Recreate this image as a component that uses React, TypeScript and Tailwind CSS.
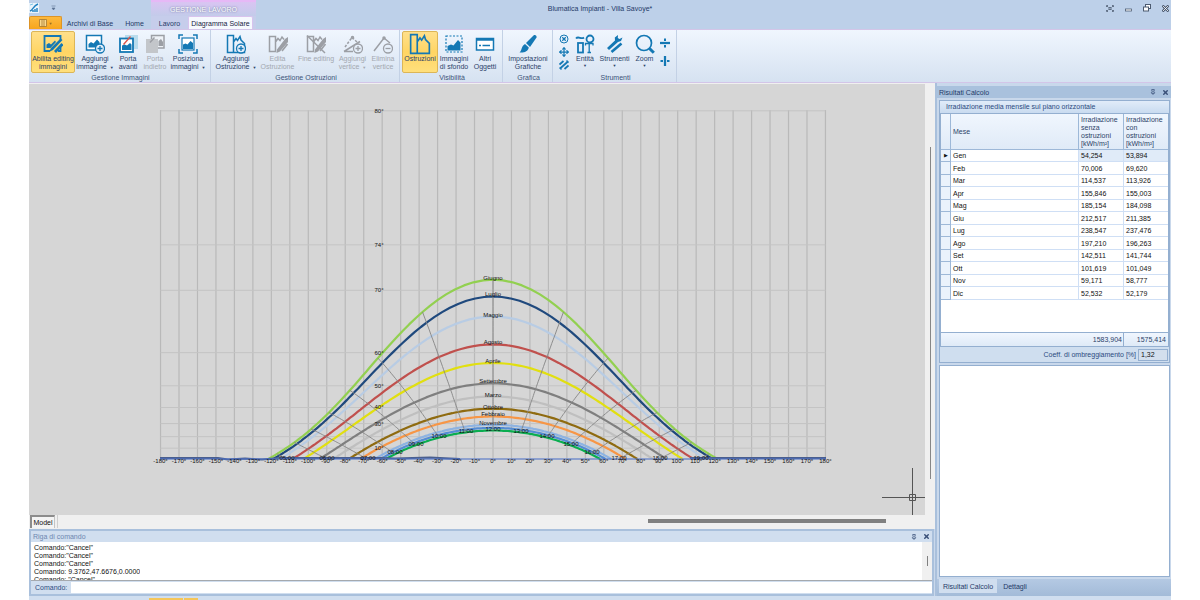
import React from 'react';
import { Move, Pin, X } from 'lucide-react';

type Point = [number, number];

const BLUE = '#1478b4';
const GREY = '#9c9fa5';

/* ---------- Ribbon icons ---------- */

const Svg: React.FC<{ size?: number; color?: string; children: React.ReactNode }> = ({ size = 20, color = BLUE, children }) => (
    <svg width={size} height={size} viewBox="0 0 20 20" fill="none" stroke={color} strokeWidth={1.5} color={color} className="shrink-0">
        {children}
    </svg>
);

const Skyline = () => <path d="M1.5 18.5V1.5H7.5V18.5ZM7.5 18.5V8L10 4.5L11.5 6.5L14 2.5L15 6L18.5 9.5V18.5Z" />;

const BadgeCircle: React.FC<{ plus?: boolean; fill?: string }> = ({ plus, fill = '#e6effa' }) => (
    <>
        <circle cx="15" cy="14.5" r="4.5" fill={fill} strokeWidth="1.3" />
        <path d={plus ? 'M12.5 14.5H17.5M15 12V17' : 'M12.5 14.5H17.5'} strokeWidth="1.3" />
    </>
);

const Pens = () => (
    <>
        <path d="M9 15.5L17 5L20 3V8L12 17.500L8.500 19Z" fill="currentColor" stroke="none" />
        <path d="M14 17L19.500 10" strokeWidth="1.6" />
    </>
);

const IconEditImages = () => (
    <Svg>
        <path d="M17.500 6V2H1.500V17H7M15 17H17.500V12" strokeWidth="1.800" />
        <path d="M3.500 14V10.500L6 9L8 10.500L12 6.500L13 8L7.500 14Z" fill="currentColor" stroke="none" />
        <path d="M6 18L8 14L17.500 4.500L19.500 6L10 16Z" fill="currentColor" stroke="none" />
        <path d="M12 18L19.500 10" strokeWidth="2.800" />
    </Svg>
);

const IconAddImage = () => (
    <Svg>
        <rect x="1.500" y="1.500" width="15" height="14.500" fill="#fff" />
        <path d="M3.500 13.500V10L6 8L8.500 9.500L12 5.500L14.500 8V13.500Z" fill="currentColor" stroke="none" />
        <BadgeCircle plus />
    </Svg>
);

const IconBringFront = () => (
    <Svg>
        <rect x="7" y="1" width="13" height="14" fill="#b9dced" stroke="none" />
        <rect x="2" y="4.500" width="13" height="13.500" fill="#fff" strokeWidth="1.800" />
        <path d="M4 16V11.500L6.500 10.500L9 11.500L12 9L13.500 10.500V16Z" fill="currentColor" stroke="none" />
        <path d="M5.500 10.500L12.500 2.500" stroke="#d9534a" strokeWidth="1.400" />
    </Svg>
);

const IconSendBack = () => (
    <Svg color={GREY}>
        <rect x="6.500" y="1.500" width="12.500" height="12.500" fill="#eef2f7" />
        <path d="M13.500 12V7L16 5L18 8V12Z" fill="currentColor" stroke="none" />
        <rect x="1" y="5" width="12" height="14" fill="#c3c6ca" stroke="none" />
        <path d="M5 8.500L9.500 3.500" strokeWidth="1.500" />
    </Svg>
);

const IconPositionImage = () => (
    <Svg>
        <path d="M1 5V1H5M15 1H19V5M19 15V19H15M5 19H1V15" />
        <rect x="4" y="4" width="12" height="12" fill="#fff" strokeWidth="1.200" />
        <path d="M5 15V10.500L7.500 9.500L9.500 10.500L12.500 7L15 9V15Z" fill="currentColor" stroke="none" />
    </Svg>
);

const IconAddObstruction = () => (
    <Svg>
        <Skyline />
        <BadgeCircle plus />
    </Svg>
);

const IconEditObstruction = () => (
    <Svg color={GREY}>
        <path d="M1.500 17.500V2.500H7.500V17.500ZM7.500 8L10 4.500L12 6.500L14 3L16 5.500" />
        <Pens />
    </Svg>
);

const IconEndEditing = () => (
    <Svg color={GREY}>
        <path d="M1.500 17.500V2.500H7.500V17.500ZM7.500 8L10 4.500L12 6.500L14 3L16 5.500" />
        <Pens />
        <path d="M1 1.500L19 19" />
    </Svg>
);

const IconAddVertex = () => (
    <Svg color={GREY}>
        <path d="M2 13L9 3.500L14 8" strokeDasharray="2.500 1.500" />
        <path d="M1 17.500L17 7.500M1 17.500H10" />
        <circle cx="9.500" cy="3.500" r="1" />
        <BadgeCircle plus />
    </Svg>
);

const IconRemoveVertex = () => (
    <Svg color={GREY}>
        <path d="M1 17L11 4L17 9" />
        <circle cx="11" cy="4" r="1" />
        <BadgeCircle />
    </Svg>
);

const IconObstructions = () => (
    <Svg size={22}>
        <Skyline />
    </Svg>
);

const IconBackground = () => (
    <Svg>
        <rect x="2" y="2" width="16" height="16" strokeWidth="1.200" strokeDasharray="2 1.500" />
        <path d="M3.500 16.500V12L7 10.500L9.500 11.500L14 6L16.500 8.500V16.500Z" fill="currentColor" stroke="none" />
    </Svg>
);

const IconOtherObjects = () => (
    <Svg>
        <rect x="1.500" y="4.500" width="17" height="11.500" fill="#fff" />
        <path d="M1.500 5.500H18.500" strokeWidth="2.500" />
        <path d="M4 11.500H6M7.500 11.500H15" />
    </Svg>
);

const IconBrush = () => (
    <Svg>
        <path d="M8 9L15.500 1.500C17 .5 19 1.500 18.500 3.500L12 13Z" fill="currentColor" stroke="none" />
        <path d="M7 10L10.800 13.500C10 17.500 6 19 1.500 18.500C4 17 3 12 7 10Z" fill="currentColor" stroke="none" />
    </Svg>
);

const IconEntity = () => (
    <Svg>
        <path d="M1 4.500C3.500 1.500 6 6 9 3.500" strokeWidth="1.800" />
        <circle cx="15" cy="5" r="3.500" strokeWidth="1.800" />
        <rect x="3" y="9" width="5" height="9.500" strokeWidth="1.800" />
        <path d="M10.500 11.500V9.500H18V11.500M14.200 9.500V18.500M12.500 18.500H16" strokeWidth="1.300" />
    </Svg>
);

const IconTools = () => (
    <Svg>
        <path d="M2 14L10 6.500L9.800 3.500L13 1L12.800 4L14.500 5L17.500 3.500L16 7L13 8L4 16Z" fill="currentColor" stroke="none" />
        <path d="M6.500 18L16.500 9.500" strokeWidth="2.600" />
    </Svg>
);

const IconZoom = () => (
    <Svg>
        <circle cx="9" cy="9" r="7.500" strokeWidth="1.700" />
        <path d="M14.500 14.500L18.800 18.800" strokeWidth="3" />
    </Svg>
);

const IconHatch = () => (
    <Svg size={10}>
        <path d="M1 9L9 2M2 17L18 3M11 18L19 11" strokeWidth="3.500" />
        <path d="M2 15V18H6M14 2H18V6" strokeWidth="2" />
    </Svg>
);

const IconCircleCross = () => (
    <Svg size={10}>
        <circle cx="10" cy="10" r="8" strokeWidth="2" />
        <path d="M6.500 6.500L13.500 13.500M13.500 6.500L6.500 13.500" strokeWidth="2.500" />
    </Svg>
);

const IconSplitH = () => (
    <Svg size={10}>
        <path d="M0 10H20" strokeWidth="4.500" />
        <path d="M10 1V6M10 14V19" strokeWidth="4" />
    </Svg>
);

const IconSplitV = () => (
    <Svg size={10}>
        <path d="M10 0V20" strokeWidth="4.500" />
        <path d="M1 10H6M14 10H19" strokeWidth="4" />
    </Svg>
);

/* ---------- Ribbon ---------- */

interface RibbonButtonProps {
    icon: React.ReactNode;
    lines: string[];
    width: string;
    active?: boolean;
    disabled?: boolean;
    menu?: boolean;
}

const RibbonButton: React.FC<RibbonButtonProps> = ({ icon, lines, width, active, disabled, menu }) => (
    <button
        disabled={disabled}
        className={`${width} flex h-[42px] flex-col items-center rounded-[2px] border pt-[1px] leading-[8px] whitespace-nowrap ${active
            ? 'border-[#dcb657] bg-gradient-to-b from-[#ffe08a] via-[#ffd564] to-[#ffdf7c]'
            : 'border-transparent'
            } ${disabled ? 'text-[#a3a8b0]' : 'text-[#2c4268]'}`}
    >
        <span className="flex h-[22px] items-center">{icon}</span>
        {lines.map((line, i) => (
            <span key={line}>
                {line}
                {menu && i === 1 && <span className="ml-[3px] text-[4px]">▼</span>}
            </span>
        ))}
        {menu && lines.length === 1 && <span className="text-[4px] leading-[5px]">▼</span>}
    </button>
);

const SmallButton: React.FC<{ label: string; children: React.ReactNode }> = ({ label, children }) => (
    <button aria-label={label} className="flex h-[13px] items-center justify-center">
        {children}
    </button>
);

const RibbonGroup: React.FC<{ title: string; width: string; children: React.ReactNode }> = ({ title, width, children }) => (
    <div className={`${width} flex shrink-0 flex-col border-r border-[#c3d1e5] pt-[1px] pl-[2px]`}>
        <div className="flex">{children}</div>
        <div className="text-center leading-[9px] text-[#3c5378]">{title}</div>
    </div>
);

const Ribbon = () => (
    <div className="flex h-[54px] border-y border-[#d3c5e8] bg-gradient-to-b from-[#f0f6fe] to-[#d6e2f1]">
        <RibbonGroup title="Gestione Immagini" width="w-[182px]">
            <RibbonButton icon={<IconEditImages />} lines={['Abilita editing', 'immagini']} width="w-[44px]" active />
            <RibbonButton icon={<IconAddImage />} lines={['Aggiungi', 'immagine']} width="w-[40px]" menu />
            <RibbonButton icon={<IconBringFront />} lines={['Porta', 'avanti']} width="w-[26px]" />
            <RibbonButton icon={<IconSendBack />} lines={['Porta', 'indietro']} width="w-[28px]" disabled />
            <RibbonButton icon={<IconPositionImage />} lines={['Posiziona', 'immagini']} width="w-[38px]" menu />
        </RibbonGroup>
        <RibbonGroup title="Gestione Ostruzioni" width="w-[189px]">
            <RibbonButton icon={<IconAddObstruction />} lines={['Aggiungi', 'Ostruzione']} width="w-[46px]" menu />
            <RibbonButton icon={<IconEditObstruction />} lines={['Edita', 'Ostruzione']} width="w-[37px]" disabled />
            <RibbonButton icon={<IconEndEditing />} lines={['Fine editing']} width="w-[40px]" disabled />
            <RibbonButton icon={<IconAddVertex />} lines={['Aggiungi', 'vertice']} width="w-[33px]" disabled menu />
            <RibbonButton icon={<IconRemoveVertex />} lines={['Elimina', 'vertice']} width="w-[28px]" disabled />
        </RibbonGroup>
        <RibbonGroup title="Visibilità" width="w-[103px]">
            <RibbonButton icon={<IconObstructions />} lines={['Ostruzioni']} width="w-[36px]" active />
            <RibbonButton icon={<IconBackground />} lines={['Immagini', 'di sfondo']} width="w-[32px]" />
            <RibbonButton icon={<IconOtherObjects />} lines={['Altri', 'Oggetti']} width="w-[30px]" />
        </RibbonGroup>
        <RibbonGroup title="Grafica" width="w-[50px]">
            <RibbonButton icon={<IconBrush />} lines={['Impostazioni', 'Grafiche']} width="w-[46px]" />
        </RibbonGroup>
        <RibbonGroup title="Strumenti" width="w-[124px]">
            <div className="flex w-[17px] flex-col pt-[1px]">
                <SmallButton label="Annulla"><IconCircleCross /></SmallButton>
                <SmallButton label="Sposta"><Move size={10} strokeWidth={3} color={BLUE} /></SmallButton>
                <SmallButton label="Tratteggio"><IconHatch /></SmallButton>
            </div>
            <RibbonButton icon={<IconEntity />} lines={['Entità']} width="w-[26px]" menu />
            <RibbonButton icon={<IconTools />} lines={['Strumenti']} width="w-[33px]" menu />
            <RibbonButton icon={<IconZoom />} lines={['Zoom']} width="w-[27px]" menu />
            <div className="flex w-[14px] flex-col gap-[5px] pt-[5px]">
                <SmallButton label="Dividi in orizzontale"><IconSplitH /></SmallButton>
                <SmallButton label="Dividi in verticale"><IconSplitV /></SmallButton>
            </div>
        </RibbonGroup>
    </div>
);

const TitleBar = () => (
    <header className="bg-[#bdd0e9] text-[#1f3a68]">
        <div className="grid h-[16px] grid-cols-[1fr_auto_1fr] items-center">
            <div className="flex h-full items-center">
                <div className="flex w-[122px] items-center">
                    <svg width="11" height="11" viewBox="0 0 11 11" fill="none">
                        <rect width="10" height="10" fill="#e9f3fb" />
                        <path d="M1 8C4 7 4 3 9 1M4 9V7M6 9V6M8 9V5" stroke="#1c7fc0" strokeWidth="1.4" />
                        <path d="M1 2L4 1" stroke="#7ec3e6" />
                    </svg>
                    <svg width="5" height="6" viewBox="0 0 5 6" className="ml-[11px]">
                        <path d="M0.500 1H4.500M1 3H4L2.500 5Z" stroke="#5b7192" strokeWidth="0.600" fill="#5b7192" />
                    </svg>
                </div>
                <div className="flex h-full w-[105px] items-center justify-center border-t-2 border-[#e6b8f6] bg-gradient-to-b from-[#d9c4f2] to-[#c3cbea] text-white [text-shadow:0_0_2px_#4d5d83]">
                    GESTIONE LAVORO
                </div>
            </div>
            <h1>Blumatica Impianti - Villa Savoye*</h1>
            <div className="flex items-center justify-end gap-[11px] pr-[2px] text-[#4c5a70]">
                <button aria-label="Schermo intero">
                    <svg width="8" height="7" viewBox="0 0 8 7" fill="none" stroke="currentColor">
                        <path d="M2 .5H.5V2M6 .5H7.500V2M.5 5V6.500H2M7.500 5V6.500H6M1 1L2.500 2.500M7 1L5.500 2.500M1 6L2.500 4.500M7 6L5.500 4.500M3 2.500H5V4.500H3Z" strokeWidth="0.800" />
                    </svg>
                </button>
                <button aria-label="Riduci a icona">
                    <svg width="7" height="7" viewBox="0 0 7 7" fill="#fff" stroke="currentColor" strokeWidth="0.800">
                        <rect x="0.500" y="4" width="6" height="2" />
                    </svg>
                </button>
                <button aria-label="Ripristina">
                    <svg width="8" height="8" viewBox="0 0 8 8" fill="#fff" stroke="currentColor">
                        <rect x="2.500" y="0.500" width="5" height="4" />
                        <rect x="0.500" y="3" width="5" height="4" />
                    </svg>
                </button>
                <button aria-label="Chiudi">
                    <svg width="7" height="7" viewBox="0 0 7 7" fill="none">
                        <path d="M0.500 0.500L6.500 6.500M6.500 0.500L0.500 6.500" stroke="currentColor" strokeWidth="2.400" />
                        <path d="M1 1L6 6M6 1L1 6" stroke="#fff" strokeWidth="0.800" />
                    </svg>
                </button>
            </div>
        </div>
        <nav className="flex h-[13px] leading-[15px]">
            <button aria-label="Menu applicazione" className="flex w-[33px] items-center justify-center gap-[2px] rounded-t-[2px] border border-b-0 border-[#dd9426] bg-gradient-to-b from-[#fdb93c] to-[#f7a51b]">
                <svg width="8" height="8" viewBox="0 0 8 8" fill="#fbd98c" stroke="#a5772f" strokeWidth="0.800">
                    <path d="M.5 .5H7.500V7.500H.5ZM3 .5V7.500M5 .5V7.500" />
                </svg>
                <span className="text-[4px] text-[#9a6a1c]">▼</span>
            </button>
            <button className="w-[56px]">Archivi di Base</button>
            <button className="w-[33px]">Home</button>
            <div className="flex w-[105px] bg-[#c6cdeb]">
                <button className="w-[37px]">Lavoro</button>
                <button className="w-[65px] rounded-t-[2px] border border-b-0 border-[#d8c3ee] bg-[#f6f9fe] leading-[13px] whitespace-nowrap text-[#16243f]">Diagramma Solare</button>
            </div>
        </nav>
    </header>
);

/* ---------- Sun path chart ---------- */

const LATITUDE = 41.9;
const CX = 493;
const BASE_Y = 459;
const rad = (deg: number) => (deg * Math.PI) / 180;

const xOf = (azimuth: number) => CX + azimuth * 1.847;
// Altitudes are drawn on a tangent scale
const yOf = (altitude: number) => BASE_Y - 61.4 * Math.tan(rad(altitude));

const sunAt = (declination: number, hourAngle: number) => {
    const lat = rad(LATITUDE);
    const dec = rad(declination);
    const h = rad(hourAngle);
    const sinAlt = Math.sin(lat) * Math.sin(dec) + Math.cos(lat) * Math.cos(dec) * Math.cos(h);
    const azimuth = Math.atan2(Math.cos(dec) * Math.sin(h), Math.sin(lat) * Math.cos(dec) * Math.cos(h) - Math.cos(lat) * Math.sin(dec));
    return { altitude: (Math.asin(sinAlt) * 180) / Math.PI, azimuth: (azimuth * 180) / Math.PI };
};

const months = [
    { name: 'Giugno', dec: 23, color: '#92d050', labelY: 280 },
    { name: 'Luglio', dec: 21.2, color: '#1f497d', labelY: 296 },
    { name: 'Maggio', dec: 18.6, color: '#b8cce4', labelY: 317 },
    { name: 'Agosto', dec: 13.7, color: '#c0504d', labelY: 344 },
    { name: 'Aprile', dec: 9.3, color: '#e1df10', labelY: 363 },
    { name: 'Settembre', dec: 2.8, color: '#7f7f7f', labelY: 383 },
    { name: 'Marzo', dec: -2.6, color: '#bfbfbf', labelY: 397 },
    { name: 'Ottobre', dec: -8.8, color: '#8f6b10', labelY: 409 },
    { name: 'Febbraio', dec: -13.4, color: '#f79646', labelY: 416 },
    { name: 'Novembre', dec: -19, color: '#8db3e2', labelY: 425 },
    { name: '', dec: -21.2, color: '#548dd4', labelY: 0 },
    { name: '', dec: -23.2, color: '#0aad50', labelY: 0 },
];

const toPoints = (points: Point[]) => points.map(([x, y]) => `${x.toFixed(1)},${y.toFixed(1)}`).join(' ');

const monthPath = (dec: number) => {
    const sunset = (Math.acos(-Math.tan(rad(LATITUDE)) * Math.tan(rad(dec))) * 180) / Math.PI;
    const points: Point[] = [];
    for (let i = -60; i <= 60; i++) {
        const sun = sunAt(dec, (sunset * i) / 60);
        points.push([xOf(sun.azimuth), yOf(sun.altitude)]);
    }
    return toPoints(points);
};

const hourPath = (hour: number) => {
    const points: Point[] = [];
    for (let dec = 23; dec >= -23.2; dec -= 1) {
        const sun = sunAt(dec, (hour - 12) * 15);
        if (sun.altitude > 0) points.push([xOf(sun.azimuth), yOf(sun.altitude)]);
    }
    return toPoints(points);
};

const hourLabels: [string, number, number][] = [
    ['05:00', 287, 460], ['06:00', 327, 460], ['07:00', 368, 460], ['08:00', 395, 454],
    ['09:00', 416, 446], ['10:00', 439, 438], ['11:00', 466, 433], ['12:00', 493, 431],
    ['13:00', 521, 433], ['14:00', 547, 438], ['15:00', 571, 446], ['16:00', 592, 454],
    ['17:00', 619, 460], ['18:00', 660, 460], ['19:00', 701, 460],
];

const altitudes = [0, 10, 20, 30, 40, 50, 60, 70, 74, 80];
const azimuths = Array.from({ length: 37 }, (_, i) => i * 10 - 180);
const hours = [5, 6, 7, 8, 9, 10, 11, 12, 13, 14, 15, 16, 17, 18, 19];

const SunChart = () => (
    <svg viewBox="29 84 896 431" preserveAspectRatio="xMidYMin meet" className="block w-full min-w-0 flex-1 bg-[#d6d6d6]" fill="none">
        <g stroke="#b9b9b9" strokeWidth="1.2">
            {azimuths.map(a => <line key={a} x1={xOf(a)} x2={xOf(a)} y1="110" y2={BASE_Y} />)}
        </g>
        <g stroke="#c4c4c4" strokeWidth="1">
            {altitudes.map(a => <line key={a} x1={xOf(-180)} x2={xOf(180)} y1={yOf(a)} y2={yOf(a)} />)}
        </g>
        <g strokeWidth="2.2" strokeLinejoin="round">
            {[...months].reverse().map(m => <polyline key={m.dec} points={monthPath(m.dec)} stroke={m.color} />)}
        </g>
        <g stroke="#858585" strokeWidth="0.9">
            {hours.map(h => <polyline key={h} points={hourPath(h)} />)}
        </g>
        <path d="M160 458H218L228 459.500L245 458.500L262 459.500L280 458H380L395 458.500L430 457.500L460 459M690 458H826" stroke="#4a5f8f" strokeWidth="1.800" />
        <path d="M160 459H826" stroke="#4f75d0" strokeWidth="1.200" />
        <g fill="#111" fontSize="6" fontFamily="'Liberation Sans', sans-serif" textAnchor="middle">
            {months.filter(m => m.name).map(m => <text key={m.name} x={CX} y={m.labelY}>{m.name}</text>)}
            {hourLabels.map(([text, x, y]) => <text key={text} x={x} y={y}>{text}</text>)}
            {altitudes.slice(1).filter(a => a !== 20).map(a => <text key={a} x="379" y={yOf(a) + 2}>{a}°</text>)}
            {azimuths.map(a => <text key={a} x={xOf(a)} y="463">{a}°</text>)}
        </g>
        <path d="M882 497.500H925M912.500 468V515M909.500 494.500H915.500V500.500H909.500Z" stroke="#555" strokeWidth="1" />
    </svg>
);

/* ---------- Panels ---------- */

const results = [
    ['Gen', '54,254', '53,894'],
    ['Feb', '70,006', '69,620'],
    ['Mar', '114,537', '113,926'],
    ['Apr', '155,846', '155,003'],
    ['Mag', '185,154', '184,098'],
    ['Giu', '212,517', '211,385'],
    ['Lug', '238,547', '237,476'],
    ['Ago', '197,210', '196,263'],
    ['Set', '142,511', '141,744'],
    ['Ott', '101,619', '101,049'],
    ['Nov', '59,171', '58,777'],
    ['Dic', '52,532', '52,179'],
];

const PanelActions = () => (
    <span className="flex items-center gap-[6px] text-[#3a5078]">
        <button aria-label="Blocca"><Pin size={6} strokeWidth={3} /></button>
        <button aria-label="Chiudi pannello"><X size={7} strokeWidth={5} /></button>
    </span>
);

const CommandPanel = () => (
    <section className="mr-[1px] flex flex-col border-2 border-[#a9c0dc] bg-[#d0deef]">
        <div className="flex h-[11px] items-center justify-between px-[2px] text-[#6d86b0]">
            <h2>Riga di comando</h2>
            <PanelActions />
        </div>
        <div className="flex h-[39px] justify-between border-b border-[#a5a9ae] bg-white text-[#111]">
            <div className="h-[38px] overflow-hidden pt-[2px] pl-[3px] leading-[8px]">
                <p>Comando:"Cancel"</p>
                <p>Comando:"Cancel"</p>
                <p>Comando:"Cancel"</p>
                <p>Comando: 9.3762,47.6676,0.0000</p>
                <p>Comando: "Cancel"</p>
            </div>
            <div className="flex w-[10px] items-center justify-center bg-[#f0f0f0]">
                <div className="h-[10px] w-px bg-[#808080]" />
            </div>
        </div>
        <div className="flex h-[13px] items-center">
            <label htmlFor="comando" className="w-[40px] pl-[4px] text-[#2c4a80]">Comando:</label>
            <input id="comando" type="text" className="h-[11px] min-w-0 flex-1 bg-white px-1 outline-none" />
        </div>
    </section>
);

const ResultsTable = () => (
    <table className="w-full table-fixed border-separate border-spacing-0 bg-white">
        <colgroup>
            <col className="w-[10px]" />
            <col />
            <col className="w-[45px]" />
            <col className="w-[44px]" />
        </colgroup>
        <thead>
            <tr className="h-[36px] bg-gradient-to-b from-[#f0f6fe] to-[#dfeaf7] text-left leading-[8px] text-[#2c4268]">
                <th className="border-r border-b border-[#9db8d8]" />
                <th className="border-r border-b border-[#9db8d8] pl-[2px] font-normal">Mese</th>
                <th className="border-r border-b border-[#9db8d8] pl-[2px] font-normal">Irradiazione senza ostruzioni [kWh/m²]</th>
                <th className="border-b border-[#9db8d8] pl-[2px] font-normal">Irradiazione con ostruzioni [kWh/m²]</th>
            </tr>
        </thead>
        <tbody className="leading-[11px] text-[#111]">
            {results.map(([month, without, withObs], i) => (
                <tr key={month} className="odd:h-[12px] even:h-[13px]">
                    <td className="border-r border-b border-[#9db8d8] bg-[#eaf2fc] text-center text-[5px]">{i === 0 ? '▶' : ''}</td>
                    <td className="border-r border-b border-[#cfdff5] pl-[2px]">{month}</td>
                    <td className={`border-r border-b border-[#cfdff5] pl-[2px] ${i === 0 ? 'bg-[#e0ebf8]' : ''}`}>{without}</td>
                    <td className={`border-b border-[#cfdff5] pl-[2px] ${i === 0 ? 'bg-[#e0ebf8]' : ''}`}>{withObs}</td>
                </tr>
            ))}
        </tbody>
    </table>
);

const ResultsPanel = () => (
    <aside className="flex w-[236px] shrink-0 flex-col border-l-2 border-[#a9c0dc] bg-[#c9d8eb] pt-[3px]">
        <div className="flex h-[12px] items-center justify-between bg-[#a9c1dd] px-[2px] text-[#1f3a68]">
            <h2>Risultati Calcolo</h2>
            <PanelActions />
        </div>
        <div className="mr-[1px] ml-[2px] mt-[2px] border border-[#94afd0] bg-[#cfdeef]">
            <h3 className="h-[12px] bg-gradient-to-b from-[#e1ecf9] to-[#c9dbf0] pl-[6px] leading-[12px] text-[#2c4a80]">Irradiazione media mensile sul piano orizzontale</h3>
            <div className="border border-[#94afd0] bg-white">
                <ResultsTable />
                <div className="mt-[32px] flex h-[14px] justify-end border-t border-[#94afd0] bg-gradient-to-b from-[#f0f6fe] to-[#dfeaf7] text-right leading-[13px] text-[#2c4268]">
                    <span className="w-[45px] border-r border-[#94afd0] pr-[1px]">1583,904</span>
                    <span className="w-[44px] pr-[2px]">1575,414</span>
                </div>
            </div>
            <div className="flex h-[15px] items-center justify-end gap-[2px] pr-[1px] text-[#2c4a80]">
                <label htmlFor="coeff">Coeff. di ombreggiamento [%]</label>
                <input id="coeff" readOnly value="1,32" className="h-[12px] w-[30px] border border-[#94afd0] bg-[#d3dfed] px-[2px] text-[#111] outline-none" />
            </div>
        </div>
        <div className="mr-[1px] ml-[2px] mt-[2px] flex-1 border border-[#94afd0] bg-white" />
        <div className="mt-[2px] flex h-[17px] bg-gradient-to-b from-[#b4c9e3] to-[#a3bbd8] pl-[2px] text-[#1f3a68]">
            <button className="h-[14px] w-[58px] bg-[#d0deef]">Risultati Calcolo</button>
            <button className="h-[14px] w-[36px]">Dettagli</button>
        </div>
    </aside>
);

const App: React.FC = () => (
    <div className="min-h-screen bg-white px-[29px] font-['Liberation_Sans',Arial,sans-serif] text-[7px] leading-[9px]">
        <div className="flex min-h-screen flex-col bg-[#c9d8eb]">
            <TitleBar />
            <Ribbon />
            <main className="flex flex-1">
                <div className="flex min-w-0 flex-1 flex-col">
                    <div className="flex flex-1 bg-[#f0f0f0] pt-[1px]">
                        <SunChart />
                        <div className="flex w-[10px] shrink-0 justify-center pt-[63px]">
                            <div className="h-[332px] w-px bg-[#868686]" />
                        </div>
                    </div>
                    <div className="flex h-[14px] items-start justify-between bg-[#f0f0f0] pr-[49px] pl-[1px]">
                        <div className="flex h-[13px]">
                            <button className="w-[25px] border-2 border-r border-b-0 border-[#8c8c8c] border-r-[#c4c4c4] bg-[#f4f4f4] text-[#111]">Model</button>
                            <div className="ml-[2px] w-px bg-[#cfcfcf]" />
                        </div>
                        <div className="mt-[4px] h-[4px] w-[238px] bg-[#808080]" />
                    </div>
                    <CommandPanel />
                </div>
                <ResultsPanel />
            </main>
            <footer className="flex h-[4px] items-end bg-[#d0deef] pl-[120px]">
                <div className="h-[2px] w-[34px] bg-[#f5c65a]" />
                <div className="ml-[1px] h-[2px] w-[14px] bg-[#f5c65a]" />
            </footer>
        </div>
    </div>
);

export default App;
